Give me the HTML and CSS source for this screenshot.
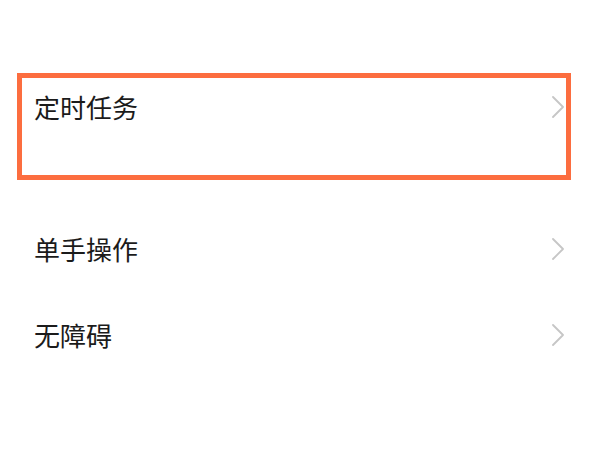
FILE: index.html
```html
<!DOCTYPE html>
<html lang="zh-CN">
<head>
<meta charset="utf-8">
<link rel="stylesheet" href="styles.css">
</head>
<body>
<div class="page">
  <div class="row highlight">
    <span class="label">定时任务</span>
    <svg class="chev" width="12" height="22" viewBox="0 0 12 22"><polyline points="1,1 11,11 1,21" fill="none" stroke="#c6c6c6" stroke-width="1.8" stroke-linecap="round" stroke-linejoin="round"/></svg>
  </div>
  <div class="rows">
    <div class="row plain">
      <span class="label">单手操作</span>
      <svg class="chev" width="12" height="22" viewBox="0 0 12 22"><polyline points="1,1 11,11 1,21" fill="none" stroke="#c6c6c6" stroke-width="1.8" stroke-linecap="round" stroke-linejoin="round"/></svg>
    </div>
    <div class="row plain">
      <span class="label">无障碍</span>
      <svg class="chev" width="12" height="22" viewBox="0 0 12 22"><polyline points="1,1 11,11 1,21" fill="none" stroke="#c6c6c6" stroke-width="1.8" stroke-linecap="round" stroke-linejoin="round"/></svg>
    </div>
  </div>
</div>
</body>
</html>
```
FILE: styles.css
```css
html, body {
  margin: 0;
  padding: 0;
  background: #ffffff;
}
.page {
  width: 600px;
  height: 450px;
  box-sizing: border-box;
  padding-top: 73px;
  font-family: "Noto Sans CJK SC", "Noto Sans", sans-serif;
  color: #1b1b1b;
}
.row {
  display: flex;
  align-items: center;
  justify-content: space-between;
}
.label {
  font-size: 26px;
  line-height: 30px;
}
.chev {
  display: block;
}
.highlight {
  align-items: flex-start;
  margin: 0 29px 0 17px;
  border: 5px solid #fc6d3f;
  padding: 14px 2px 53px 12px;
  height: 97px;
  box-sizing: border-box;
  height: 107px;
}
.highlight .chev {
  margin-top: 4px;
}
.rows {
  margin-top: 26px;
}
.plain {
  height: 86px;
  padding: 0 36px 0 34px;
}
```
